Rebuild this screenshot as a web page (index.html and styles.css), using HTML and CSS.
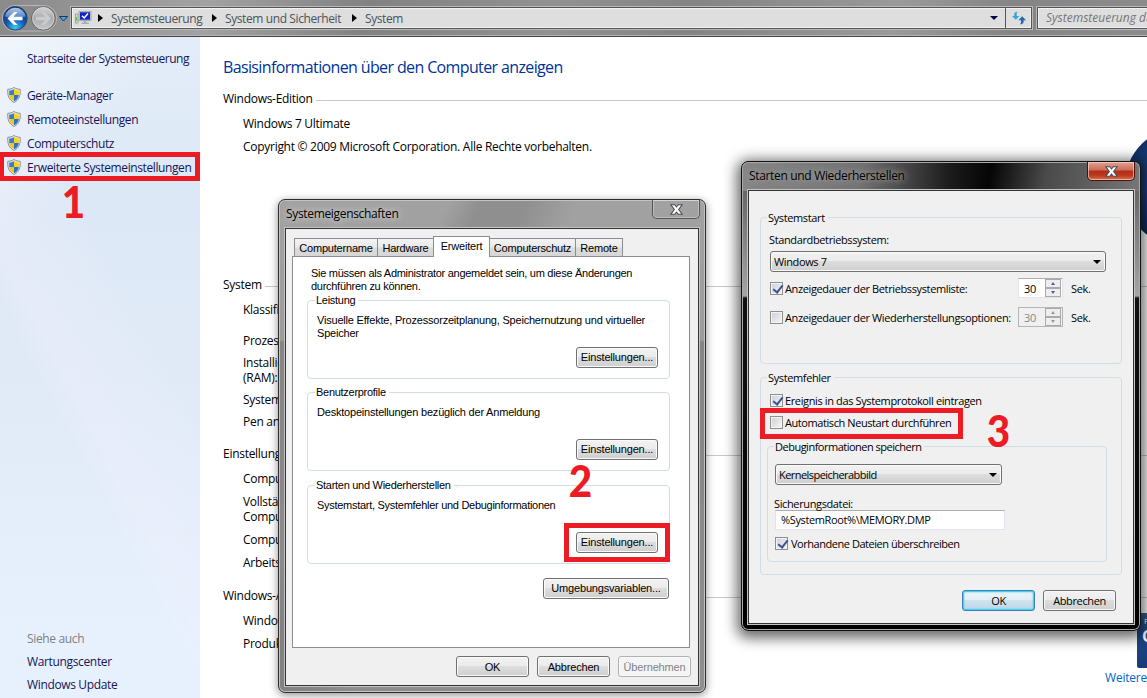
FILE: index.html
```html
<!DOCTYPE html>
<html lang="de">
<head>
    <meta charset="UTF-8">
    <title>System</title>
    <link rel="stylesheet" href="styles.css">
</head>
<body>
    <svg width="0" height="0" class="defs">
        <symbol id="shield" viewBox="0 0 14 16">
            <path d="M7 .5 C5 1.8 3 2.3 .8 2.3 C.3 8 1.8 13 7 15.5 C12.2 13 13.7 8 13.2 2.3 C11 2.3 9 1.8 7 .5Z" fill="#e9e9e4" stroke="#8b8f91" stroke-width="1"/>
            <path d="M7 2.2 C5.6 3.1 4 3.5 2.2 3.6 L2.2 8 H7Z" fill="#2f7fd6"/>
            <path d="M7 2.2 C8.4 3.1 10 3.5 11.8 3.6 L11.8 8 H7Z" fill="#fcd116"/>
            <path d="M2.2 8 C2.5 10.9 4.2 13 7 14.2 V8Z" fill="#f9c513"/>
            <path d="M11.8 8 C11.5 10.9 9.8 13 7 14.2 V8Z" fill="#2673cc"/>
        </symbol>
        <symbol id="cross" viewBox="0 0 12 10">
            <path d="M.8 .6 H4.3 L6 2.7 L7.7 .6 H11.2 L8 5 L11.2 9.4 H7.7 L6 7.3 L4.3 9.4 H.8 L4 5Z" fill="#fff" stroke="#4b4b58" stroke-width="1"/>
        </symbol>
    </svg>

    <div class="explorer">
        <div class="navbar">
            <svg class="nav-buttons" width="70" height="36" viewBox="0 0 70 36">
                <defs>
                    <radialGradient id="blue" cx=".5" cy=".9" r=".8">
                        <stop offset="0" stop-color="#3cc8f6"/>
                        <stop offset=".5" stop-color="#1659b5"/>
                        <stop offset="1" stop-color="#0c3384"/>
                    </radialGradient>
                    <linearGradient id="gloss" x2="0" y2="1">
                        <stop offset="0" stop-color="#dfeaf7"/>
                        <stop offset="1" stop-color="#5b8ed2"/>
                    </linearGradient>
                    <linearGradient id="grey" x2="0" y2="1">
                        <stop offset="0" stop-color="#d2d4d5"/>
                        <stop offset=".5" stop-color="#a9abac"/>
                        <stop offset="1" stop-color="#c6c8c9"/>
                    </linearGradient>
                </defs>
                <path d="M15 5.5 H44 A12.5 12.5 0 0 1 44 31 H15 A12.5 12.5 0 0 1 15 5.5Z" fill="#8b8b8b" stroke="#b5b5b5"/>
                <circle cx="15.3" cy="18.3" r="11.8" fill="url(#blue)" stroke="#24476f"/>
                <path d="M4.8 16.5 A10.7 10.7 0 0 1 25.8 16.5 Q15 19 4.8 16.5Z" fill="url(#gloss)" opacity=".8"/>
                <path d="M7.5 18.5 L14 12 H17.5 L13.4 16.7 H22.5 V20.3 H13.4 L17.5 25 H14Z" fill="#fff"/>
                <circle cx="43.3" cy="18.3" r="11.8" fill="url(#grey)" stroke="#636566"/>
                <circle cx="43.3" cy="18.3" r="10.7" fill="none" stroke="#dcdcdc" stroke-opacity=".7"/>
                <path d="M51 18.5 L44.5 12 H41 L45.1 16.7 H36 V20.3 H45.1 L41 25 H44.5Z" fill="#c9cbcc"/>
                <path d="M59.5 16.5 H67.5 L63.5 21Z" fill="#49a3de" stroke="#123a63"/>
            </svg>
            <div class="address">
                <svg class="pc-icon" width="17" height="14" viewBox="0 0 17 14">
                    <rect x=".5" y="3" width="2.5" height="9" fill="#d8d8d8" stroke="#888" stroke-width=".6"/>
                    <rect x=".5" y="6" width="1.6" height="4" fill="#5cc936"/>
                    <rect x="4" y=".5" width="12" height="9" fill="#c9ccd2" stroke="#98a0a8" stroke-width=".8"/>
                    <rect x="5" y="1.3" width="10" height="7.4" fill="#1321c6"/>
                    <path d="M7 4.8 L9.2 7 L13 2.6" fill="none" stroke="#fff" stroke-width="1.5"/>
                    <path d="M8.5 10 H11.5 V11.5 H14 V13 H6.5 V11.5 H8.5Z" fill="#a9afb6"/>
                </svg>
                <i class="sep"></i>
                <span class="crumb-1">Systemsteuerung</span>
                <i class="sep"></i>
                <span class="crumb-2">System und Sicherheit</span>
                <i class="sep"></i>
                <span>System</span>
                <i class="arrow-down"></i>
                <div class="refresh">
                    <svg width="16" height="14" viewBox="0 0 16 14">
                        <path d="M6.6 .8 C3.4 .8 3 2.6 3.3 5 H1 L4.8 8.8 L8.4 5 H5.8 C5.4 3 5.6 1.8 6.6 .8Z" fill="#35a3dc"/>
                        <path d="M9 13.2 C12.4 13.2 12.9 11.4 12.6 9.2 H15 L11.2 5.2 L7.4 9.2 H10 C10.3 11 10 12.4 9 13.2Z" fill="#2a65b0"/>
                    </svg>
                </div>
            </div>
            <div class="search">Systemsteuerung durchsuchen</div>
        </div>

        <div class="content">
            <div class="sidebar">
                <a class="home">Startseite der Systemsteuerung</a>
                <ul class="tasks">
                    <li><svg><use href="#shield"/></svg>Geräte-Manager</li>
                    <li><svg><use href="#shield"/></svg>Remoteeinstellungen</li>
                    <li><svg><use href="#shield"/></svg>Computerschutz</li>
                    <li><svg><use href="#shield"/></svg>Erweiterte Systemeinstellungen</li>
                </ul>
                <ul class="see-also">
                    <li class="muted">Siehe auch</li>
                    <li>Wartungscenter</li>
                    <li>Windows Update</li>
                </ul>
            </div>

            <div class="main">
                <h1>Basisinformationen über den Computer anzeigen</h1>
                <h2>Windows-Edition</h2>
                <ul class="rows">
                    <li>Windows 7 Ultimate</li>
                    <li>Copyright © 2009 Microsoft Corporation. Alle Rechte vorbehalten.</li>
                </ul>
                <h2 class="h-system">System</h2>
                <ul class="rows rows-system">
                    <li>Klassifikation:</li>
                    <li>Prozessor:</li>
                    <li>Installierter<br>(RAM):</li>
                    <li>Systemtyp:</li>
                    <li>Pen and Touch:</li>
                </ul>
                <h2 class="h-name">Einstellungen</h2>
                <ul class="rows">
                    <li>Computer</li>
                    <li>Vollständiger<br>Computer</li>
                    <li>Computer</li>
                    <li>Arbeitsgruppe:</li>
                </ul>
                <h2 class="h-activation">Windows-Aktivierung</h2>
                <ul class="rows">
                    <li>Windows</li>
                    <li>Produkt-ID:</li>
                </ul>
                <div class="orb"></div>
                <div class="genuine"><small>F</small><b>O</b></div>
                <a class="more">Weitere</a>
            </div>
        </div>
    </div>

    <div class="window props">
        <div class="titlebar">
            <span class="title">Systemeigenschaften</span>
            <div class="close"><svg width="13" height="11"><use href="#cross"/></svg></div>
        </div>
        <div class="client">
            <div class="tabs">
                <div class="tab tab-name">Computername</div>
                <div class="tab tab-hw">Hardware</div>
                <div class="tab active">Erweitert</div>
                <div class="tab tab-prot">Computerschutz</div>
                <div class="tab tab-remote">Remote</div>
            </div>
            <div class="panel">
                <p class="intro">Sie müssen als Administrator angemeldet sein, um diese Änderungen<br>durchführen zu können.</p>
                <fieldset>
                    <legend>Leistung</legend>
                    <div class="group-body">
                        <p class="perf">Visuelle Effekte, Prozessorzeitplanung, Speichernutzung und virtueller<br>Speicher</p>
                        <button class="btn-settings">Einstellungen...</button>
                    </div>
                </fieldset>
                <fieldset>
                    <legend>Benutzerprofile</legend>
                    <div class="group-body">
                        <p class="perf">Desktopeinstellungen bezüglich der Anmeldung</p>
                        <button class="btn-settings">Einstellungen...</button>
                    </div>
                </fieldset>
                <fieldset>
                    <legend>Starten und Wiederherstellen</legend>
                    <div class="group-body">
                        <p>Systemstart, Systemfehler und Debuginformationen</p>
                        <button class="btn-settings">Einstellungen...</button>
                    </div>
                </fieldset>
                <button class="btn-env">Umgebungsvariablen...</button>
            </div>
            <div class="buttons">
                <button>OK</button>
                <button>Abbrechen</button>
                <button disabled>Übernehmen</button>
            </div>
        </div>
    </div>

    <div class="window startup">
        <div class="titlebar">
            <span class="title">Starten und Wiederherstellen</span>
            <div class="close"><svg width="13" height="11"><use href="#cross"/></svg></div>
        </div>
        <div class="client">
            <fieldset class="group-start">
                <legend>Systemstart</legend>
                <label class="os-label">Standardbetriebssystem:</label>
                <div class="select">Windows 7<i class="arrow-down"></i></div>
                <div class="check-row row-list">
                    <span class="check on"></span>
                    <span class="check-text">Anzeigedauer der Betriebssystemliste:</span>
                    <div class="spinner">30<div class="spin"><i class="up"></i><i class="down"></i></div></div>
                    <span>Sek.</span>
                </div>
                <div class="check-row row-options">
                    <span class="check"></span>
                    <span class="check-text">Anzeigedauer der Wiederherstellungsoptionen:</span>
                    <div class="spinner off">30<div class="spin"><i class="up"></i><i class="down"></i></div></div>
                    <span>Sek.</span>
                </div>
            </fieldset>
            <fieldset class="group-error">
                <legend>Systemfehler</legend>
                <div class="check-row row-event"><span class="check on"></span>Ereignis in das Systemprotokoll eintragen</div>
                <div class="check-row row-restart"><span class="check"></span>Automatisch Neustart durchführen</div>
                <fieldset class="group-debug">
                    <legend>Debuginformationen speichern</legend>
                    <div class="select">Kernelspeicherabbild<i class="arrow-down"></i></div>
                    <label class="dump-label">Sicherungsdatei:</label>
                    <div class="input">%SystemRoot%\MEMORY.DMP</div>
                    <div class="check-row row-overwrite"><span class="check on"></span>Vorhandene Dateien überschreiben</div>
                </fieldset>
            </fieldset>
            <div class="buttons">
                <button class="default">OK</button>
                <button>Abbrechen</button>
            </div>
        </div>
    </div>

    <div class="mark mark-1"></div>
    <div class="mark mark-2"></div>
    <div class="mark mark-3"></div>
    <div class="step step-1">1</div>
    <div class="step step-2">2</div>
    <div class="step step-3">3</div>
</body>
</html>
```
FILE: styles.css
```css
* {
    box-sizing: border-box;
}
body {
    position: relative;
    width: 1147px;
    height: 698px;
    margin: 0;
    overflow: hidden;
    background-color: white;
    font-family: "Open Sans", sans-serif;
    font-size: 12px;
    letter-spacing: -0.28px;
    color: #000;
    white-space: nowrap;
}
ul {
    list-style: none;
    margin: 0;
    padding: 0;
}
h1, h2, p {
    margin: 0;
    font-weight: normal;
}
.defs {
    position: absolute;
}

/* Explorer */
.explorer {
    display: flex;
    flex-direction: column;
    width: 1147px;
    height: 698px;
    overflow: hidden;
}
.navbar {
    display: flex;
    height: 37px;
    border-bottom: 1px solid #444;
    box-shadow: inset 0 -1px #b4b4b4;
    background: linear-gradient(100deg, #8a8a8a 0%, #a2a2a2 18%, #828282 32%, #929292 48%, #848484 60%, #9a9a9a 78%, #858585 88%, #8c8c8c 100%);
}
.nav-buttons {
    flex: none;
}
.address {
    display: flex;
    flex: none;
    align-items: center;
    width: 961px;
    height: 22px;
    margin: 7px 0 0 1px;
    padding-left: 3px;
    border: 1px solid #555;
    outline: 1px solid #b9b9b9;
    box-shadow: inset 0 0 0 1px #f2f2f2;
    background: #dedede;
    color: #4d5357;
    letter-spacing: -0.4px;
}
.address .sep {
    width: 0;
    height: 0;
    border: 4px solid transparent;
    border-left: 5px solid #000;
    border-right: 0;
    margin: 0 8px 0 8px;
}
.address .pc-icon + .sep {
    margin-left: 6px;
}
.crumb-1 {
    width: 93px;
}
.crumb-2 {
    width: 119px;
}
.arrow-down {
    width: 0;
    height: 0;
    border: 4px solid transparent;
    border-top: 4px solid #000;
    border-bottom: 0;
    margin-left: auto;
}
.address .arrow-down {
    border-top-color: #00004a;
    margin-right: 7px;
}
.refresh {
    display: flex;
    align-items: center;
    justify-content: center;
    width: 26px;
    height: 20px;
    border-left: 1px solid #555;
}
.search {
    flex: none;
    width: 130px;
    height: 22px;
    margin: 7px 0 0 5px;
    padding-left: 8px;
    line-height: 20px;
    border: 1px solid #555;
    outline: 1px solid #b9b9b9;
    box-shadow: inset 0 0 0 1px #f2f2f2;
    background: #dedede;
    color: #757575;
    font-style: italic;
    letter-spacing: 0;
}
.content {
    display: flex;
    flex: 1;
}
.sidebar {
    display: flex;
    flex-direction: column;
    width: 200px;
    padding: 10px 0 2px;
    background:
        linear-gradient(62deg, transparent 38%, rgba(240, 238, 252, .4) 43%, rgba(240, 238, 252, .15) 58%, transparent 62%),
        linear-gradient(125deg, rgba(255, 255, 255, .5) 0, transparent 140px),
        linear-gradient(#e3edf9 0%, #dde8f6 25%, #e0eaf7 50%, #e7f1fd 90%);
    color: #15155a;
    letter-spacing: -0.4px;
}
.home {
    height: 24px;
    line-height: 24px;
    padding-left: 27px;
    letter-spacing: -0.46px;
}
.tasks {
    margin-top: 12px;
}
.tasks li {
    display: flex;
    align-items: center;
    height: 24px;
    padding-left: 7px;
}
.tasks svg {
    width: 14px;
    height: 16px;
    margin-right: 6px;
}
.see-also {
    margin-top: auto;
    letter-spacing: -0.35px;
}
.see-also li {
    height: 23px;
    line-height: 23px;
    padding-left: 27px;
}
.see-also .muted {
    color: #808080;
}
.main {
    position: relative;
    flex: 1;
    padding: 18px 0 0 23px;
    line-height: 15px;
}
.main h1 {
    height: 24px;
    margin-bottom: 9px;
    line-height: 25px;
    font-size: 16px;
    letter-spacing: -0.63px;
    color: #003399;
}
.main h2 {
    display: flex;
    align-items: center;
    height: 20px;
    margin-bottom: 8px;
    font-size: 12px;
}
.main h2::after {
    content: "";
    flex: 1;
    height: 1px;
    margin: 4px 0 0 3px;
    background: #c8c8c8;
}
.main .h-system {
    margin-top: 120px;
}
.main .h-name {
    margin-top: 14px;
}
.main .h-activation {
    margin-top: 15px;
}
.rows {
    display: flex;
    flex-direction: column;
    gap: 8px;
    padding-left: 20px;
}
.rows-system {
    gap: 7px;
}
.rows-system li:first-child {
    margin-bottom: 9px;
}
.orb {
    position: absolute;
    left: 924px;
    top: 89px;
    width: 122px;
    height: 122px;
    border-radius: 50%;
    background: radial-gradient(circle at 50% 45%, #3b66ab 0%, #1c3f7c 40%, #0a2350 80%);
}
.genuine {
    position: absolute;
    left: 937px;
    top: 576px;
    width: 60px;
    height: 55px;
    padding: 2px 0 0 7px;
    border-radius: 2px;
    background: linear-gradient(#3a5f8e, #1d4a87 30%, #1a3b77);
    color: #fff;
}
.genuine small, .genuine b {
    display: block;
}
.genuine small {
    font-size: 8px;
    line-height: 11px;
}
.genuine b {
    padding-top: 1px;
    margin-left: -2px;
    font-size: 16px;
    line-height: 18px;
}
.more {
    position: absolute;
    left: 905px;
    top: 633px;
    color: #0066cc;
    letter-spacing: -0.2px;
}

/* Dialoge */
.window {
    position: absolute;
    border: 1px solid #2e2e2e;
    border-radius: 7px;
    padding: 0 6px 6px;
}
.titlebar {
    display: flex;
    justify-content: space-between;
    height: 28px;
}
.title {
    padding-left: 1px;
    line-height: 28px;
    letter-spacing: -0.33px;
    text-shadow: 0 0 6px rgba(255, 255, 255, .5), 0 0 10px rgba(255, 255, 255, .5);
}
.close {
    display: flex;
    align-items: center;
    justify-content: center;
    width: 48px;
    height: 19px;
    margin-right: -1px;
    border: 1px solid #555;
    border-top: 0;
    border-radius: 0 0 5px 5px;
    box-shadow: inset 0 0 0 1px rgba(255, 255, 255, .3);
}
.client {
    border: 1px solid #333;
    outline: 1px solid #c4c4c4;
    background: #f0f0f0;
    font-size: 11px;
}
fieldset {
    min-width: 0;
    margin: 0;
    padding: 0;
    border: 1px solid #d0dde6;
    border-radius: 4px;
}
legend {
    height: 15px;
    margin-left: 7px;
    padding: 0 3px 0 1px;
    line-height: 15px;
}
button {
    display: flex;
    align-items: center;
    justify-content: center;
    width: 73px;
    height: 21px;
    padding: 0;
    border: 1px solid #707070;
    border-radius: 3px;
    box-shadow: inset 0 0 0 1px #fafafa;
    background: linear-gradient(#f2f2f2 0%, #ebebeb 48%, #dddddd 50%, #cfcfcf 100%);
    font: inherit;
    letter-spacing: inherit;
    color: #000;
}
button:disabled {
    border-color: #adb2b5;
    background: #f4f4f4;
    color: #838383;
}
button.default {
    border-color: #3c7fb1;
    box-shadow: inset 0 0 0 1px #46d0f4, inset 0 0 2px 1px #46d0f4;
    background: linear-gradient(#ecf4f8 0%, #e2eff6 48%, #cfe3ee 50%, #bcd7e6 100%);
}
.buttons {
    display: flex;
    justify-content: flex-end;
    gap: 8px;
}

/* Systemeigenschaften */
.props {
    left: 278px;
    top: 199px;
    width: 428px;
    height: 494px;
    background: linear-gradient(115deg, transparent 0 26%, rgba(110, 110, 110, .35) 31% 38%, transparent 46%), linear-gradient(#a2a2a2 0, #9c9c9c 140px, #858585 142px, #8e8e8e 100%);
    box-shadow: inset 0 0 0 1px #c3c3c3, 0 2px 8px rgba(0, 0, 0, .45);
}
.props .client {
    height: 458px;
    padding: 7px 7px 0 6px;
    font-family: "Liberation Sans", sans-serif;
    letter-spacing: -0.28px;
}
.tabs {
    display: flex;
    align-items: flex-end;
    height: 21px;
    margin-bottom: -1px;
    padding-left: 2px;
    letter-spacing: -0.2px;
}
.tab {
    height: 19px;
    line-height: 18px;
    text-align: center;
    border: 1px solid #898c95;
    border-left-width: 0;
    background: linear-gradient(#f3f3f3, #eaeaea 48%, #dcdcdc 52%, #d6d6d6);
}
.tab-name {
    width: 84px;
    border-left-width: 1px;
}
.tab-hw {
    width: 55px;
    border-right-width: 0;
}
.tab-prot {
    width: 86px;
}
.tab-remote {
    width: 47px;
}
.tab.active {
    width: 57px;
    height: 21px;
    border-left-width: 1px;
    border-bottom: 0;
    background: white;
}
.panel {
    height: 392px;
    margin-right: 1px;
    padding: 10px 20px 0 14px;
    border: 1px solid #898c95;
    background: white;
    line-height: 13px;
}
.intro {
    padding-left: 4px;
}
.panel fieldset {
    height: 86px;
    margin: 0 -1px 7px 0;
}
.panel fieldset:first-of-type {
    margin-bottom: 6px;
}
.group-body {
    display: flex;
    flex-direction: column;
    justify-content: space-between;
    height: 70px;
    padding: 6px 11px 10px 9px;
}
.perf {
    letter-spacing: -0.2px;
}
.btn-settings {
    width: 82px;
    align-self: flex-end;
}
.btn-env {
    width: 126px;
    margin: 14px 0 0 auto;
}
.props button {
    letter-spacing: -0.18px;
}
.props .buttons {
    margin-top: 8px;
}

/* Starten und Wiederherstellen */
.startup {
    left: 741px;
    top: 161px;
    width: 400px;
    height: 470px;
    border-color: #111;
    background:
        linear-gradient(100deg, rgba(140, 140, 140, .9) 0%, rgba(120, 120, 120, .8) 30%, rgba(0, 0, 0, .7) 52%, #050505 62%, #4a4a4a 76%, #777 100%) 0 0 / 100% 29px no-repeat,
        linear-gradient(#555 0, #a5a5a5 134px, #111 136px, #000 100%);
    box-shadow: inset 0 0 0 1px #aaa, 0 3px 14px 4px rgba(0, 0, 0, .6);
}
.startup .titlebar .title {
    text-shadow: 0 0 6px #aaa, 0 0 9px #999;
}
.startup .close {
    border-color: #48120b;
    box-shadow: inset 0 0 0 1px rgba(255, 225, 215, .6);
    background: linear-gradient(#dfa295 0%, #cd6a57 45%, #b22d14 50%, #bd3a1e 75%, #d8744e 100%);
}
.startup .client {
    height: 434px;
    padding: 19px 11px 0;
    font-family: "Open Sans", sans-serif;
    letter-spacing: -0.37px;
    line-height: 15px;
}
.group-start {
    height: 154px;
    padding: 0 15px 0 9px;
}
.group-start legend {
    margin-left: -3px;
}
.os-label {
    display: block;
    margin: 7px 0 3px -1px;
}
.select {
    display: flex;
    align-items: center;
    height: 21px;
    padding: 0 4px 0 3px;
    border: 1px solid #707070;
    border-radius: 3px;
    box-shadow: inset 0 0 0 1px #fafafa;
    background: linear-gradient(#f2f2f2 0%, #ebebeb 48%, #dddddd 50%, #cfcfcf 100%);
}
.check-row {
    display: flex;
    align-items: center;
    height: 20px;
}
.check {
    flex: none;
    width: 13px;
    height: 13px;
    margin-right: 2px;
    border: 1px solid #8e8f8f;
    box-shadow: inset 0 0 0 1px #f4f4f4;
    background: linear-gradient(135deg, #cbcfd5, #f6f6f6);
}
.check.on::after {
    content: "";
    display: block;
    width: 4px;
    height: 8px;
    margin: 0 0 0 4px;
    border: solid #3c5394;
    border-width: 0 2px 2px 0;
    transform: rotate(38deg);
}
.check-text {
    width: 233px;
}
.group-start .select {
    margin-top: 4px;
}
.row-list {
    margin-top: 6px;
}
.row-options {
    margin-top: 9px;
}
.spinner {
    display: flex;
    align-items: center;
    justify-content: space-between;
    width: 45px;
    height: 20px;
    margin-right: 8px;
    padding: 0 1px 0 5px;
    border: 1px solid #e2e3ea;
    border-top-color: #abadb3;
    background: white;
}
.spinner.off {
    border-color: #b5b5b5;
    background: #f0f0f0;
    color: #888;
}
.spin {
    display: flex;
    flex-direction: column;
}
.spin i {
    display: flex;
    align-items: center;
    justify-content: center;
    width: 16px;
    height: 9px;
    border: 1px solid #aaa;
    background: #eee;
}
.spin i::before {
    content: "";
    border: 2.5px solid transparent;
}
.spin .up::before {
    border-top: 0;
    border-bottom: 3px solid #4a62ad;
}
.spin .down::before {
    border-bottom: 0;
    border-top: 3px solid #4a62ad;
}
.off .up::before {
    border-bottom-color: #999;
}
.off .down::before {
    border-top-color: #999;
}
.group-error {
    height: 205px;
    margin-top: 6px;
    padding: 0 14px 0 6px;
}
.group-error > legend {
    margin-left: 0;
}
.group-error > .check-row {
    padding-left: 3px;
}
.row-event {
    margin-top: 5px;
}
.row-restart {
    margin-top: 2px;
    letter-spacing: -0.42px;
}
.group-debug {
    height: 123px;
    margin-top: 7px;
    padding: 0 0 0 7px;
}
.group-debug legend {
    margin-left: -1px;
    letter-spacing: -0.5px;
}
.group-debug .select {
    width: 227px;
    margin-top: 10px;
    letter-spacing: -0.55px;
}
.dump-label {
    display: block;
    margin: 11px 0 0 -1px;
}
.input {
    width: 230px;
    height: 20px;
    margin-top: -1px;
    padding-left: 5px;
    line-height: 18px;
    border: 1px solid #e2e3ea;
    border-top-color: #abadb3;
    background: white;
}
.row-overwrite {
    margin-top: 3px;
    letter-spacing: -0.46px;
}
.row-overwrite .check {
    margin-right: 3px;
}
.startup .buttons {
    margin-top: 15px;
    padding-right: 6px;
}

/* Markierungen */
.mark {
    position: absolute;
    border: 5px solid #ed1c24;
}
.mark-1 {
    left: 0;
    top: 152px;
    width: 200px;
    height: 29px;
    border-left-width: 4px;
}
.mark-2 {
    left: 564px;
    top: 523px;
    width: 106px;
    height: 39px;
}
.mark-3 {
    left: 760px;
    top: 408px;
    width: 203px;
    height: 31px;
}
.step {
    position: absolute;
    font-family: Lato, sans-serif;
    font-size: 43px;
    font-weight: 900;
    line-height: 50px;
    letter-spacing: 0;
    color: #ed1c24;
    transform: scaleX(.94);
}
.step-1 {
    left: 61px;
    top: 177px;
}
.step-2 {
    left: 568px;
    top: 456px;
}
.step-3 {
    left: 986px;
    top: 406px;
}
```
